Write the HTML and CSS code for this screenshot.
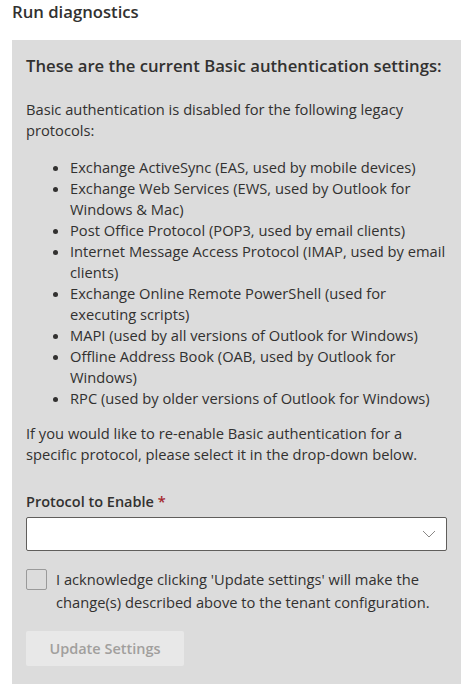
FILE: index.html
```html
<!DOCTYPE html>
<html>
<head>
<meta charset="utf-8">
<link rel="stylesheet" href="styles.css">
</head>
<body>
<div class="page">
  <h1 class="title">Run diagnostics</h1>
  <div class="panel">
    <h2 class="heading">These are the current Basic authentication settings:</h2>
    <p class="text">Basic authentication is disabled for the following legacy protocols:</p>
    <ul class="list">
      <li>Exchange ActiveSync (EAS, used by mobile devices)</li>
      <li>Exchange Web Services (EWS, used by Outlook for Windows &amp; Mac)</li>
      <li>Post Office Protocol (POP3, used by email clients)</li>
      <li>Internet Message Access Protocol (IMAP, used by email clients)</li>
      <li>Exchange Online Remote PowerShell (used for executing scripts)</li>
      <li>MAPI (used by all versions of Outlook for Windows)</li>
      <li>Offline Address Book (OAB, used by Outlook for Windows)</li>
      <li>RPC (used by older versions of Outlook for Windows)</li>
    </ul>
    <p class="text">If you would like to re-enable Basic authentication for a specific protocol, please select it in the drop-down below.</p>
    <label class="label">Protocol to Enable <span class="req">*</span></label>
    <div class="dropdown">
      <svg class="chev" width="14" height="8" viewBox="0 0 14 8"><path d="M1 1 L7 7 L13 1" fill="none" stroke="#8a8886" stroke-width="1"/></svg>
    </div>
    <div class="check">
      <span class="box"></span>
      <span class="check-text">I acknowledge clicking 'Update settings' will make the change(s) described above to the tenant configuration.</span>
    </div>
    <button class="btn">Update Settings</button>
  </div>
</div>
</body>
</html>
```
FILE: styles.css
```css
html, body { margin: 0; padding: 0; background: #ffffff; }
body { font-family: "Open Sans", "Noto Sans", sans-serif; color: #323130; }
.page { padding: 0 11px 0 12px; }
.title { margin: 0; padding-top: 1px; font-size: 16.7px; font-weight: 600; line-height: 22px; height: 40px; box-sizing: border-box; }
.panel { background: #dcdcdc; padding: 13px 14px 18px 14px; }
.heading { margin: 0; font-size: 16.7px; font-weight: 600; line-height: 26px; }
.text { margin: 0; font-size: 14.7px; line-height: 21px; }
.panel > .heading + .text { margin-top: 20px; }
.list { margin: 16px 0 14px 0; padding-left: 44px; font-size: 14.7px; line-height: 21px; }
.label { display: block; margin-top: 27px; font-size: 14.5px; font-weight: 600; line-height: 20px; }
.req { color: #a4262c; }
.dropdown { margin-top: 5px; height: 34px; box-sizing: border-box; background: #fff; border: 1px solid #605e5c; border-radius: 2px; display: flex; align-items: center; justify-content: flex-end; padding-right: 10px; }
.check { display: flex; gap: 9px; margin-top: 17px; font-size: 14.7px; line-height: 23px; }
.box { flex: none; width: 21px; height: 21px; box-sizing: border-box; border: 1px solid #9a9a9a; border-radius: 2px; margin-top: 1px; }
.btn { margin-top: 17px; display: block; width: 158px; height: 35px; border: none; border-radius: 2px; background: #e8e8e8; color: #a19f9d; font-family: inherit; font-size: 14.5px; font-weight: 600; }
```
